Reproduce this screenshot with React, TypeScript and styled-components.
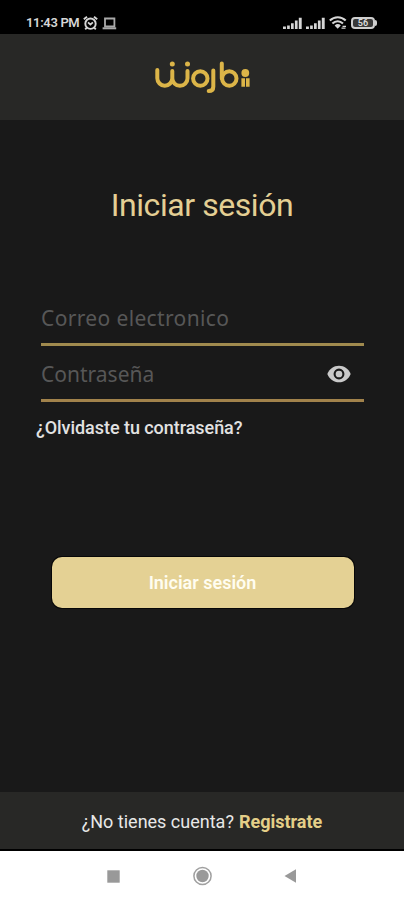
import React from "react";
import styled, { createGlobalStyle } from "styled-components";

const GlobalStyle = createGlobalStyle`
  * { box-sizing: border-box; }
  body { margin: 0; background: #191919; font-family: Roboto, sans-serif; }
`;

const Screen = styled.div`
  display: flex;
  flex-direction: column;
  width: 404px;
  height: 900px;
  overflow: hidden;
  background: #191919;
`;

const StatusBar = styled.div`
  display: flex;
  justify-content: space-between;
  align-items: center;
  height: 34px;
  padding: 12px 27px 0 26px;
  background: #000;
  color: #d6d6d6;
`;

const StatusGroup = styled.div<{ $gap: number }>`
  display: flex;
  align-items: center;
  gap: ${(p) => p.$gap}px;
  svg { display: block; }
`;

const Clock = styled.span`
  font-size: 13px;
  line-height: 16px;
  font-weight: 600;
  letter-spacing: -0.35px;
`;

const Header = styled.header`
  display: flex;
  align-items: center;
  justify-content: center;
  height: 86px;
  background: #282826;
`;

const Main = styled.main`
  display: flex;
  flex-direction: column;
  flex: 1;
`;

const Title = styled.h1`
  margin: 64px 0 0;
  text-align: center;
  font-size: 32px;
  line-height: 42px;
  font-weight: 400;
  letter-spacing: -0.44px;
  color: #e4cf94;
`;

const Form = styled.form`
  display: flex;
  flex-direction: column;
  margin: 64px 40px 0 41px;
`;

const Field = styled.label<{ $line: string }>`
  display: flex;
  align-items: center;
  height: 56px;
  padding: 2px 13px 0 0;
  border-bottom: 3px solid ${(p) => p.$line};
`;

const Input = styled.input<{ $spacing: number }>`
  flex: 1;
  min-width: 0;
  padding: 0;
  border: 0;
  outline: 0;
  background: transparent;
  color: #ddd;
  font: 400 21px/28px "Noto Sans", sans-serif;
  letter-spacing: ${(p) => p.$spacing}px;
  &::placeholder { color: #575757; opacity: 1; }
`;

const EyeButton = styled.button`
  display: flex;
  padding: 0;
  border: 0;
  background: none;
`;

const Forgot = styled.a`
  margin: 14px 0 0 36px;
  font-size: 18px;
  line-height: 24px;
  letter-spacing: -0.05px;
  font-weight: 500;
  color: #e2e2e2;
`;

const Submit = styled.button`
  width: 302px;
  height: 51px;
  margin: 117px 0 0 52px;
  padding: 0 1px 0 0;
  border: 0;
  border-radius: 10px;
  background: #e4d194;
  box-shadow: 0 0 0 1px #070707;
  color: #fffdf0;
  font: 600 18px/24px Roboto, sans-serif;
`;

const Footer = styled.footer`
  display: flex;
  justify-content: center;
  align-items: center;
  gap: 5px;
  height: 59px;
  padding-top: 2px;
  background: #282826;
  border-bottom: 2px solid #000;
  color: #e8e8e8;
  font-size: 18px;
`;

const Register = styled.a`
  font-weight: 700;
  color: #e4cf88;
`;

const NavBar = styled.nav`
  display: flex;
  align-items: center;
  justify-content: space-between;
  height: 49px;
  padding: 1px 107px 0 107px;
  background: #fff;
`;

const Logo = () => (
  <svg width="102" height="38" viewBox="151 58 102 38" fill="none" stroke="#dcb548" strokeWidth="4" strokeLinecap="round" strokeLinejoin="round" role="img" aria-label="Wojbii">
    <path d="M157.3 70v8.2a7.5 7.5 0 0 0 15 0V71M172.3 78.2a7.6 7.6 0 0 0 15.2 0V71" />
    <circle cx="200.3" cy="78.5" r="7.2" />
    <path d="M213.3 70.5v16.3c0 3.2-1.8 4.3-4.6 4.3M221.8 63.5v15" />
    <circle cx="229.3" cy="78.5" r="7.2" />
    <g fill="#dcb548" stroke="none">
      <circle cx="172.3" cy="64" r="2.5" />
      <circle cx="187.5" cy="64" r="2.5" />
      <circle cx="245.3" cy="73" r="3.9" />
      <path d="M241.4 78.3h3.6v8.4h-3.6zM246 78.3h3.6v8.4H246z" />
    </g>
  </svg>
);

const AlarmIcon = () => (
  <svg width="15" height="15" viewBox="0 0 15 15" fill="none" stroke="currentColor" strokeWidth="1.9">
    <circle cx="7.5" cy="7.7" r="5.2" />
    <path d="M.8 3.3 4 .8M14.2 3.3 11 .8M3.8 11.7l-1.6 1.6M11.2 11.7l1.6 1.6" />
    <path d="M5 6.3 7.4 8.5l2.5-2.2" strokeWidth="1.7" />
  </svg>
);

const LaptopIcon = () => (
  <svg width="15" height="13" viewBox="0 0 15 13" fill="none" stroke="#aaa" strokeWidth="1.8">
    <path d="M3 9.5V1.5h9.4v8z" />
    <path d="M.6 11.3h13.6" strokeWidth="2" />
  </svg>
);

const SignalIcon = () => (
  <svg width="19" height="13" viewBox="0 0 19 13" fill="currentColor">
    <path d="M0 9.6h2.9V12H0zM4.1 8.4h2.7V12H4.1zM8 6.2h2.7V12H8zM11.9 3.6h2.7V12h-2.7zM15.8 .8h2.9V12h-2.9z" />
  </svg>
);

const WifiIcon = () => (
  <svg width="18" height="14" viewBox="0 0 18 14" fill="none" stroke="currentColor" strokeWidth="2.1">
    <path d="M.8 4.6C5.5.1 12.1.1 16.7 4.6M3.4 7.6c3.2-3 7.4-3 10.6 0" />
    <path d="M5.6 9.4c2-1.8 4.4-1.8 6.2 0l-3.1 3.4z" fill="currentColor" stroke="none" />
    <path d="M12.5 12.2h4M13.5 10.3h3.5" strokeWidth="1.3" />
  </svg>
);

const Battery = styled.div`
  display: flex;
  align-items: center;
`;

const BatteryBody = styled.div`
  width: 24px;
  height: 12px;
  border: 2px solid #cfcfcf;
  border-radius: 4px;
  background: #393939;
  color: #ddd;
  font-size: 9px;
  line-height: 9px;
  font-weight: 600;
  text-align: center;
`;

const BatteryTip = styled.div`
  width: 2px;
  height: 6px;
  border-radius: 0 2px 2px 0;
  background: #cfcfcf;
`;

const EyeIcon = () => (
  <svg width="24" height="18" viewBox="0 0 24 18">
    <path d="M.3 9C2.3 3.9 6.7.7 12 .7S21.7 3.9 23.7 9c-2 5.1-6.4 8.3-11.7 8.3S2.3 14.1.3 9z" fill="#c9c9c9" />
    <circle cx="12" cy="9" r="4.4" fill="#c9c9c9" stroke="#191919" strokeWidth="2.1" />
  </svg>
);

export default function App() {
  return (
    <>
      <GlobalStyle />
      <Screen>
        <StatusBar>
          <StatusGroup $gap={4}>
            <Clock>11:43 PM</Clock>
            <AlarmIcon />
            <LaptopIcon />
          </StatusGroup>
          <StatusGroup $gap={4}>
            <SignalIcon />
            <SignalIcon />
            <WifiIcon />
            <Battery>
              <BatteryBody>56</BatteryBody>
              <BatteryTip />
            </Battery>
          </StatusGroup>
        </StatusBar>
        <Header>
          <Logo />
        </Header>
        <Main>
          <Title>Iniciar sesión</Title>
          <Form>
            <Field $line="#a08a4e">
              <Input $spacing={0.36} placeholder="Correo electronico" />
            </Field>
            <Field $line="#a1824b">
              <Input $spacing={0} placeholder="Contraseña" type="password" />
              <EyeButton type="button" aria-label="Mostrar contraseña">
                <EyeIcon />
              </EyeButton>
            </Field>
          </Form>
          <Forgot>¿Olvidaste tu contraseña?</Forgot>
          <Submit>Iniciar sesión</Submit>
        </Main>
        <Footer>
          <span>¿No tienes cuenta?</span>
          <Register>Registrate</Register>
        </Footer>
        <NavBar>
          <svg width="13" height="13" viewBox="0 0 13 13">
            <path d="M.3.3h12.4v12.4H.3z" fill="#999" />
          </svg>
          <svg width="20" height="20" viewBox="0 0 20 20">
            <circle cx="10.5" cy="10" r="8.6" fill="none" stroke="#a0a0a0" strokeWidth="1.5" />
            <circle cx="10.5" cy="10" r="6.2" fill="#999" />
          </svg>
          <svg width="13" height="14" viewBox="0 0 13 14">
            <path d="M.5 7 12 .3v13.4z" fill="#999" />
          </svg>
        </NavBar>
      </Screen>
    </>
  );
}
